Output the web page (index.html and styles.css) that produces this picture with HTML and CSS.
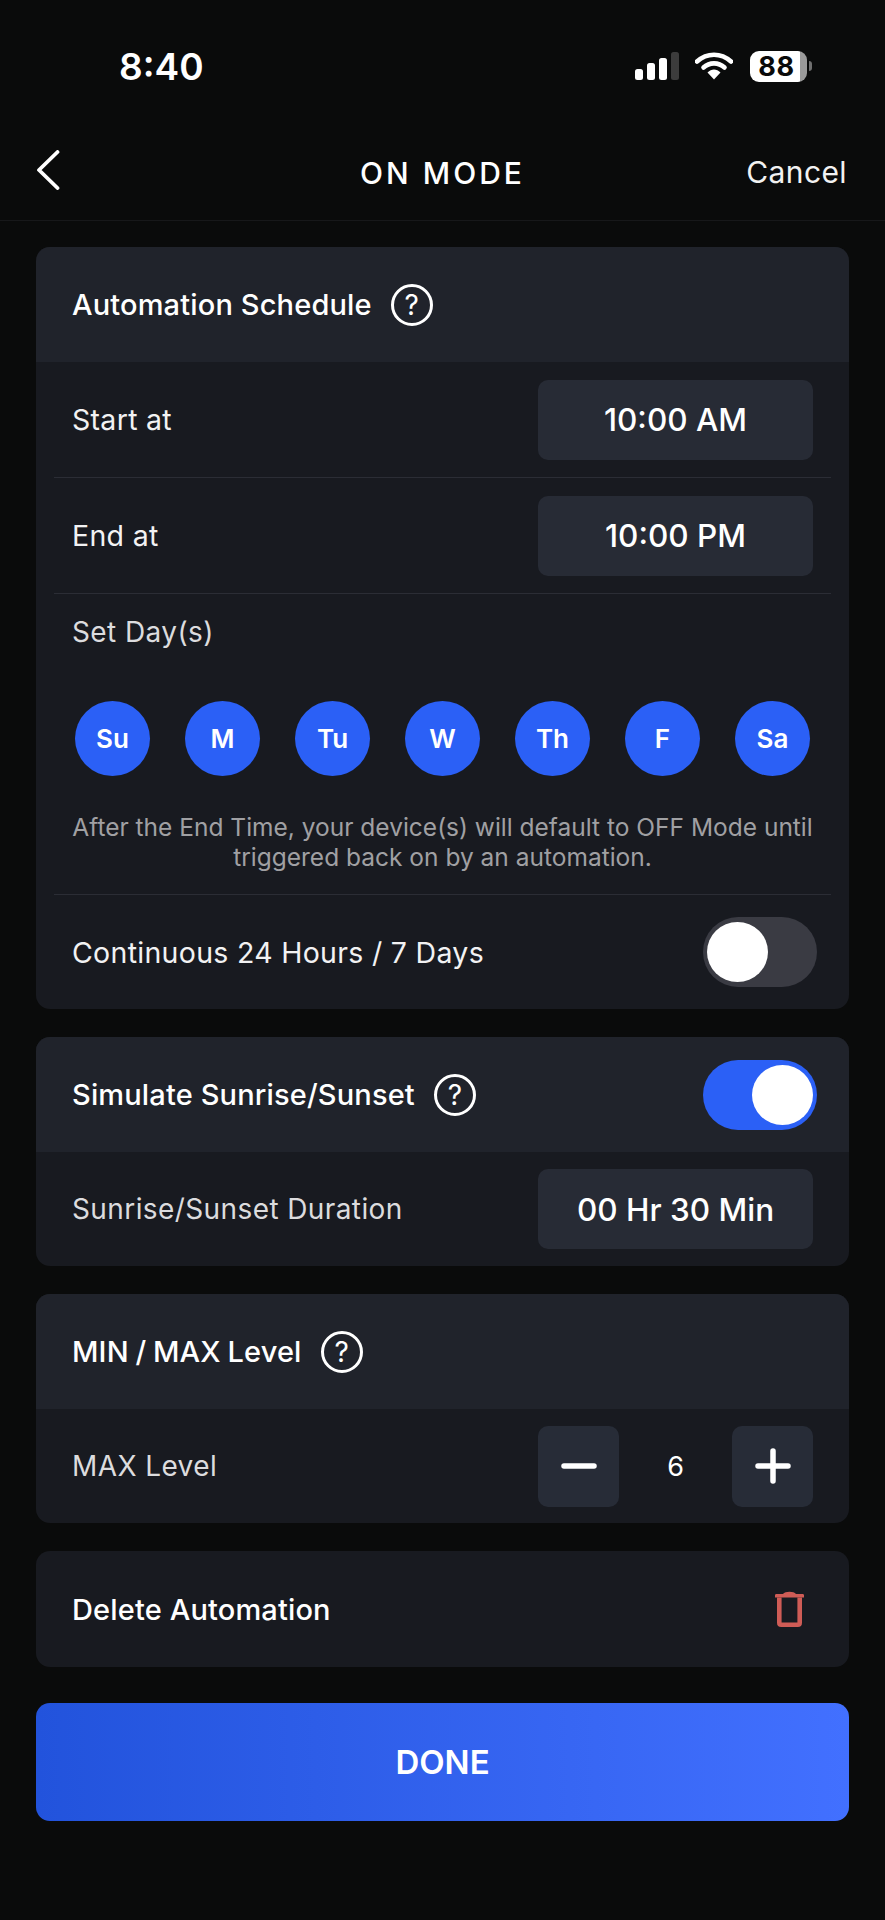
FILE: index.html
```html
<!DOCTYPE html>
<html lang="en">
<head>
    <meta charset="UTF-8">
    <meta name="viewport" content="width=device-width, initial-scale=1.0">
    <title>On Mode</title>
    <link rel="stylesheet" href="styles.css">
</head>
<body>
    <div class="status-bar">
        <span class="clock">8:40</span>
        <div class="status-icons">
            <svg width="44" height="28" viewBox="0 0 44 28">
                <rect x="0" y="17" width="8" height="11" rx="2.5" fill="#fff"/>
                <rect x="12" y="11" width="8" height="17" rx="2.5" fill="#fff"/>
                <rect x="24" y="6" width="8" height="22" rx="2.5" fill="#fff"/>
                <rect x="36" y="0" width="8" height="28" rx="2.5" fill="#3c3c3c"/>
            </svg>
            <svg width="38" height="28" viewBox="0 0 38 28">
                <path d="M2 9.5C12 0.5 26 0.5 36 9.5" fill="none" stroke="#fff" stroke-width="4.6" stroke-linecap="round"/>
                <path d="M8.5 15.5C14.5 10 23.5 10 29.5 15.5" fill="none" stroke="#fff" stroke-width="4.6" stroke-linecap="round"/>
                <path d="M12.5 20.5C16.5 16.4 21.5 16.4 25.5 20.5L19 27.5Z" fill="#fff"/>
            </svg>
            <div class="battery">
                <div class="battery-body"><span>88</span></div>
                <div class="battery-cap"></div>
            </div>
        </div>
    </div>

    <header class="nav">
        <svg class="back" width="24" height="40" viewBox="0 0 24 40">
            <path d="M21.5 2L3 20L21.5 38" fill="none" stroke="#fff" stroke-width="3.8" stroke-linecap="round" stroke-linejoin="round"/>
        </svg>
        <h1>ON MODE</h1>
        <span class="cancel">Cancel</span>
    </header>

    <main class="content">
        <section class="card">
            <div class="card-head">
                <h2>Automation Schedule</h2>
                <span class="help">?</span>
            </div>
            <div class="row">
                <span class="label">Start at</span>
                <div class="value">10:00 AM</div>
            </div>
            <div class="row">
                <span class="label">End at</span>
                <div class="value">10:00 PM</div>
            </div>
            <div class="days-block">
                <div class="label label-soft">Set Day(s)</div>
                <div class="days">
                    <span class="day">Su</span>
                    <span class="day">M</span>
                    <span class="day">Tu</span>
                    <span class="day">W</span>
                    <span class="day">Th</span>
                    <span class="day">F</span>
                    <span class="day">Sa</span>
                </div>
                <p class="note">After the End Time, your device(s) will default to OFF Mode until triggered back on by an automation.</p>
            </div>
            <div class="row row-toggle">
                <span class="label">Continuous 24 Hours / 7 Days</span>
                <div class="toggle"><span class="knob"></span></div>
            </div>
        </section>

        <section class="card">
            <div class="card-head">
                <h2>Simulate Sunrise/Sunset</h2>
                <span class="help">?</span>
                <div class="toggle on"><span class="knob"></span></div>
            </div>
            <div class="row row-last">
                <span class="label label-soft">Sunrise/Sunset Duration</span>
                <div class="value">00 Hr 30 Min</div>
            </div>
        </section>

        <section class="card">
            <div class="card-head">
                <h2 class="tight">MIN / MAX Level</h2>
                <span class="help">?</span>
            </div>
            <div class="row row-last">
                <span class="label label-soft">MAX Level</span>
                <div class="stepper">
                    <div class="step">
                        <svg width="36" height="36" viewBox="0 0 36 36"><path d="M3 18H33" stroke="#fff" stroke-width="5.5" stroke-linecap="round"/></svg>
                    </div>
                    <span class="step-value">6</span>
                    <div class="step">
                        <svg width="36" height="36" viewBox="0 0 36 36"><path d="M3 18H33M18 3V33" stroke="#fff" stroke-width="5.5" stroke-linecap="round"/></svg>
                    </div>
                </div>
            </div>
        </section>

        <section class="card delete-card">
            <h2>Delete Automation</h2>
            <svg class="trash" width="29" height="37" viewBox="0 0 29 37">
                <path d="M0 7.500V5.500C0 4.500 0.500 4 1.500 4H8C10 1 19 1 21 4H27.500C28.500 4 29 4.500 29 5.500V7.500Z" fill="#cf5c56"/>
                <path d="M4.300 7.500V32.700C4.300 33.800 5 34.700 6.200 34.700H22.800C24 34.700 24.700 33.800 24.700 32.700V7.500" fill="none" stroke="#cf5c56" stroke-width="4.600"/>
            </svg>
        </section>

        <button class="done">DONE</button>
    </main>
</body>
</html>
```

FILE: styles.css
```css
/* General */
* {
    margin: 0;
    padding: 0;
    box-sizing: border-box;
}
body {
    width: 885px;
    height: 1920px;
    overflow: hidden;
    background-color: #0a0b0b;
    color: #fff;
    font-family: Inter, "Liberation Sans", sans-serif;
}

/* Status bar */
.status-bar {
    height: 132px;
    display: flex;
    justify-content: space-between;
    align-items: center;
    padding: 0 73px 0 119px;
}
.clock {
    font-size: 37px;
    font-weight: 600;
}
.status-icons {
    display: flex;
    align-items: center;
    gap: 16px;
}
.battery {
    display: flex;
    align-items: center;
    gap: 2px;
    margin-left: 1px;
}
.battery-body {
    width: 57px;
    height: 31px;
    border-radius: 9px;
    background: linear-gradient(90deg, #fff 88%, #9a9a9a 88%);
    color: #0a0a0a;
    display: flex;
    align-items: center;
    justify-content: center;
    font-size: 27px;
    font-weight: 700;
    letter-spacing: 0.8px;
    padding-right: 4px;
}
.battery-cap {
    width: 3px;
    height: 10px;
    border-radius: 0 3px 3px 0;
    background-color: #6f6f6f;
}

/* Nav */
.nav {
    height: 89px;
    border-bottom: 1px solid #17181a;
    display: flex;
    justify-content: space-between;
    align-items: center;
    padding: 0 38px 13px 36px;
    position: relative;
}
.nav h1 {
    position: absolute;
    left: 0;
    right: 0;
    top: 23px;
    text-align: center;
    font-size: 30px;
    line-height: 36px;
    font-weight: 500;
    letter-spacing: 3px;
}
.cancel {
    font-size: 30px;
    font-weight: 400;
    letter-spacing: 0.4px;
    color: #f2f2f2;
    margin-top: 5px;
}

/* Cards */
.content {
    display: flex;
    flex-direction: column;
    gap: 28px;
    padding: 26px 36px 0 36px;
}
.card {
    background-color: #181a20;
    border-radius: 14px;
    overflow: hidden;
}
.card-head {
    height: 115px;
    background-color: #20232b;
    display: flex;
    align-items: center;
    gap: 19px;
    padding: 0 32px 0 36px;
}
.card-head .toggle {
    margin-left: auto;
}
h2 {
    font-size: 29px;
    font-weight: 500;
    letter-spacing: 0.15px;
}
h2.tight {
    word-spacing: -1.2px;
}
.help {
    width: 42px;
    height: 42px;
    border: 3px solid #fff;
    border-radius: 50%;
    display: flex;
    align-items: center;
    justify-content: center;
    font-size: 28px;
    font-weight: 400;
}

/* Rows */
.row {
    height: 116px;
    margin: 0 18px;
    padding: 0 18px;
    border-bottom: 1px solid #2b2d35;
    display: flex;
    justify-content: space-between;
    align-items: center;
}
.row-last {
    height: 114px;
    border-bottom: none;
}
.row-toggle {
    height: 114px;
    padding-right: 14px;
    border-bottom: none;
}
.label {
    font-size: 28.5px;
    letter-spacing: 0.3px;
    color: #f2f2f3;
}
.label-soft {
    font-size: 28px;
    letter-spacing: 0.4px;
    color: #dcdcde;
}
.value {
    width: 275px;
    height: 80px;
    background-color: #272b35;
    border-radius: 10px;
    display: flex;
    align-items: center;
    justify-content: center;
    font-size: 31.5px;
    font-weight: 500;
}

/* Days */
.days-block {
    height: 301px;
    padding: 21px 18px 0 18px;
    margin: 0 18px;
    border-bottom: 1px solid #2b2d35;
}
.days {
    display: flex;
    justify-content: space-between;
    margin: 52px 3px 0 3px;
}
.day {
    width: 75px;
    height: 75px;
    border-radius: 50%;
    background-color: #2b60f6;
    display: flex;
    align-items: center;
    justify-content: center;
    font-size: 26px;
    font-weight: 600;
}
.note {
    margin: 36px -6px 0 -6px;
    text-align: center;
    font-size: 24.5px;
    line-height: 30px;
    color: #a0a0a3;
}

/* Toggle */
.toggle {
    width: 114px;
    height: 70px;
    border-radius: 35px;
    background-color: #3a3b43;
    padding: 5px 4px;
    display: flex;
}
.toggle.on {
    background-color: #2b60f6;
    justify-content: flex-end;
}
.knob {
    width: 61px;
    height: 60px;
    border-radius: 50%;
    background-color: #fff;
}

/* Stepper */
.stepper {
    width: 275px;
    display: flex;
    justify-content: space-between;
    align-items: center;
}
.step {
    width: 81px;
    height: 81px;
    border-radius: 10px;
    background-color: #272c37;
    display: flex;
    align-items: center;
    justify-content: center;
}
.step-value {
    font-size: 27px;
}

/* Delete */
.delete-card {
    height: 116px;
    display: flex;
    justify-content: space-between;
    align-items: center;
    padding: 0 45px 0 36px;
}
.trash {
    display: block;
    margin-top: -2px;
}

/* Done */
.done {
    margin-top: 8px;
    height: 118px;
    border: none;
    border-radius: 14px;
    background: linear-gradient(90deg, #2253dc, #4270ff);
    color: #fff;
    font-family: inherit;
    font-size: 33px;
    font-weight: 600;
}
```
